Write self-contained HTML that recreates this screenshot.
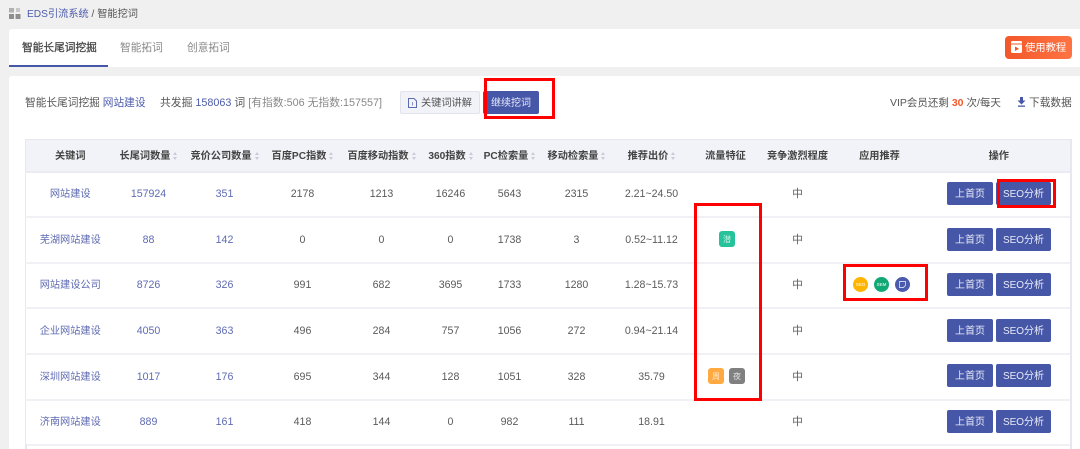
<!DOCTYPE html>
<html lang="zh">
<head>
<meta charset="utf-8">
<title>EDS引流系统</title>
<style>
*{box-sizing:border-box}
html,body{margin:0;padding:0;width:1080px;height:449px;overflow:hidden}
body{background:#f0f0f0;font-family:"Liberation Sans","Noto Sans CJK SC",sans-serif;font-size:10.3px;color:#555}
#w{position:absolute;left:0;top:0;width:1080px;height:449px;overflow:hidden;filter:blur(.3px);background:#f0f0f0}
.a{position:absolute;white-space:nowrap}
.t{line-height:14px}
.blue{color:#4d5cab}
.panel{position:absolute;background:#fff;left:9px;right:0}
.red{position:absolute;border:3px solid #f00;z-index:5}
table{position:absolute;left:25px;top:139px;width:1046px;border-collapse:collapse;table-layout:fixed;background:#fff;border-left:1.5px solid #e7e7ef;border-top:1px solid #e7e7ef}
th{height:32px;background:#f2f3f8;font-size:10.2px;line-height:14px;color:#444;font-weight:bold;padding:3px 0 0;white-space:nowrap;text-align:center;border-bottom:2px solid #ebebf3}
td{padding:0;text-align:center;white-space:nowrap;border-bottom:2px solid #f0f0f5;font-size:10.6px;line-height:12px;color:#5a5a5a}
td:nth-child(1),td:nth-child(2),td:nth-child(3){color:#5f6bb2}
td:nth-child(1){font-size:10.2px;padding-top:2px}
th:last-child{padding-left:4px}
.s{display:inline-block;width:4px;height:8px;margin-left:3px;vertical-align:-1px}
.btn{position:absolute;height:23px;background:#4657a8;color:#e9ebf7;font-size:10px;line-height:26px;text-align:center;border-radius:2px}
.b1{left:947px;width:46px}
.b2{left:996px;width:55px}
.tag{position:absolute;width:16px;height:16px;border-radius:3px;color:#ffffffc0;font-size:8px;line-height:17px;text-align:center}
.c{position:absolute;top:277px;width:15px;height:15px;border-radius:50%;color:#ffffffc0;font-size:4.5px;line-height:15px;text-align:center;font-weight:bold}
</style>
</head>
<body>
<div id="w">
<svg class="a" style="left:9px;top:8px" width="12" height="11" viewBox="0 0 12 11"><rect x="0" y="0" width="5" height="4.500" fill="#b0b0b0"/><rect x="7" y="0" width="4" height="4" fill="#c8c8c8"/><rect x="0" y="6" width="5" height="5" fill="#8e8e8e"/><rect x="6.500" y="6" width="5" height="5" fill="#8e8e8e"/></svg>
<div class="a t" style="left:27px;top:8px;font-size:10.2px"><span class="blue">EDS引流系统</span> / 智能挖词</div>

<div class="panel" style="top:29px;height:38px;border-radius:3px 0 0 0"></div>
<div class="a" style="left:9px;top:65px;width:99px;height:2px;background:#4657a8"></div>
<div class="a t" style="left:22px;top:41px;font-size:10.7px;color:#444;-webkit-text-stroke:.25px #444">智能长尾词挖掘</div>
<div class="a t" style="left:120px;top:41px;font-size:10.7px;color:#888">智能拓词</div>
<div class="a t" style="left:187px;top:41px;font-size:10.7px;color:#888">创意拓词</div>

<div class="a" style="left:1005px;top:36px;width:67px;height:23px;border-radius:4px;background:linear-gradient(90deg,#f2582a,#ff7343)"></div>
<svg class="a" style="left:1011px;top:41px" width="11" height="12" viewBox="0 0 11 12"><rect x="0" y="0" width="11" height="12" rx="1.500" fill="#fff"/><rect x="0" y="2.500" width="11" height="1" fill="#f2582a"/><path d="M4 5.500 8 7.700 4 10z" fill="#f2582a"/></svg>
<div class="a t" style="left:1025px;top:42px;font-size:10.3px;color:#fff">使用教程</div>

<div class="panel" style="top:76px;bottom:0;border-radius:3px 0 0 0"></div>

<div class="a t" style="left:25px;top:96px;font-size:10.7px">智能长尾词挖掘 <span class="blue">网站建设</span></div>
<div class="a t" style="left:160px;top:96px;font-size:10.8px">共发掘 <span class="blue">158063</span> 词 <span style="color:#888">[有指数:506 无指数:157557]</span></div>

<div class="a" style="left:400px;top:91px;width:80px;height:23px;background:#f2f3f8;border:1px solid #e2e3ec;border-radius:2px"></div>
<svg class="a" style="left:408px;top:98px" width="9" height="10" viewBox="0 0 9 10"><path d="M.5.500H6L8.500 3V9.500H.5Z" fill="none" stroke="#5c6ab0"/><path d="M4.500 4V7.500" stroke="#8a93c6"/></svg>
<div class="a t" style="left:421px;top:97px;font-size:10.2px;color:#555">关键词讲解</div>
<div class="a" style="left:483px;top:91px;width:56px;height:23px;background:#4657a8;border-radius:2px;color:#e9ebf7;font-size:10px;line-height:26px;text-align:center">继续挖词</div>

<div class="a t" style="left:890px;top:96px;font-size:10.5px">VIP会员还剩 <b style="color:#f4582a">30</b> 次/每天</div>
<svg class="a" style="left:1017px;top:97px" width="9" height="10" viewBox="0 0 9 10"><path d="M3 0H6V3.500H8.500L4.500 7.500.5 3.500H3Z" fill="#4657a8"/><rect x="1" y="8.500" width="7" height="1.300" fill="#4657a8"/></svg>
<div class="a t" style="left:1029px;top:96px;font-size:10.7px">下载数据</div>

<table>
<colgroup><col style="width:89px"><col style="width:68px"><col style="width:84px"><col style="width:72px"><col style="width:86px"><col style="width:52px"><col style="width:66px"><col style="width:68px"><col style="width:82px"><col style="width:66px"><col style="width:78px"><col style="width:86px"><col></colgroup>
<tr>
<th>关键词</th>
<th>长尾词数量<svg class="s" viewBox="0 0 4 8"><path d="M2 0 4 3H0ZM2 8 0 5H4Z" fill="#c9ccd8"/></svg></th>
<th>竞价公司数量<svg class="s" viewBox="0 0 4 8"><path d="M2 0 4 3H0ZM2 8 0 5H4Z" fill="#c9ccd8"/></svg></th>
<th>百度PC指数<svg class="s" viewBox="0 0 4 8"><path d="M2 0 4 3H0ZM2 8 0 5H4Z" fill="#c9ccd8"/></svg></th>
<th>百度移动指数<svg class="s" viewBox="0 0 4 8"><path d="M2 0 4 3H0ZM2 8 0 5H4Z" fill="#c9ccd8"/></svg></th>
<th>360指数<svg class="s" viewBox="0 0 4 8"><path d="M2 0 4 3H0ZM2 8 0 5H4Z" fill="#c9ccd8"/></svg></th>
<th>PC检索量<svg class="s" viewBox="0 0 4 8"><path d="M2 0 4 3H0ZM2 8 0 5H4Z" fill="#c9ccd8"/></svg></th>
<th>移动检索量<svg class="s" viewBox="0 0 4 8"><path d="M2 0 4 3H0ZM2 8 0 5H4Z" fill="#c9ccd8"/></svg></th>
<th>推荐出价<svg class="s" viewBox="0 0 4 8"><path d="M2 0 4 3H0ZM2 8 0 5H4Z" fill="#c9ccd8"/></svg></th>
<th>流量特征</th><th>竞争激烈程度</th><th>应用推荐</th><th>操作</th>
</tr>
<tr style="height:45px"><td>网站建设</td><td>157924</td><td>351</td><td>2178</td><td>1213</td><td>16246</td><td>5643</td><td>2315</td><td>2.21~24.50</td><td></td><td>中</td><td></td><td></td></tr>
<tr style="height:46px"><td>芜湖网站建设</td><td>88</td><td>142</td><td>0</td><td>0</td><td>0</td><td>1738</td><td>3</td><td>0.52~11.12</td><td></td><td>中</td><td></td><td></td></tr>
<tr style="height:45px"><td>网站建设公司</td><td>8726</td><td>326</td><td>991</td><td>682</td><td>3695</td><td>1733</td><td>1280</td><td>1.28~15.73</td><td></td><td>中</td><td></td><td></td></tr>
<tr style="height:46px"><td>企业网站建设</td><td>4050</td><td>363</td><td>496</td><td>284</td><td>757</td><td>1056</td><td>272</td><td>0.94~21.14</td><td></td><td>中</td><td></td><td></td></tr>
<tr style="height:46px"><td>深圳网站建设</td><td>1017</td><td>176</td><td>695</td><td>344</td><td>128</td><td>1051</td><td>328</td><td>35.79</td><td></td><td>中</td><td></td><td></td></tr>
<tr style="height:45px"><td>济南网站建设</td><td>889</td><td>161</td><td>418</td><td>144</td><td>0</td><td>982</td><td>111</td><td>18.91</td><td></td><td>中</td><td></td><td></td></tr>
</table>
<div class="a" style="left:1070px;top:139px;width:1.500px;height:310px;background:#e7e7ef"></div>
<div class="a" style="left:25px;top:444px;width:1.500px;height:5px;background:#e7e7ef"></div>

<div class="btn b1" style="top:182px">上首页</div><div class="btn b2" style="top:182px">SEO分析</div>
<div class="btn b1" style="top:228px">上首页</div><div class="btn b2" style="top:228px">SEO分析</div>
<div class="btn b1" style="top:273px">上首页</div><div class="btn b2" style="top:273px">SEO分析</div>
<div class="btn b1" style="top:319px">上首页</div><div class="btn b2" style="top:319px">SEO分析</div>
<div class="btn b1" style="top:364px">上首页</div><div class="btn b2" style="top:364px">SEO分析</div>
<div class="btn b1" style="top:410px">上首页</div><div class="btn b2" style="top:410px">SEO分析</div>

<div class="tag" style="left:719px;top:231px;background:#26c29a">潜</div>
<div class="tag" style="left:708px;top:368px;background:#ffa940">周</div>
<div class="tag" style="left:729px;top:368px;background:#808080">夜</div>

<div class="c" style="left:853px;background:#ffb400">SEO</div>
<div class="c" style="left:874px;background:#12a875">SEM</div>
<div class="c" style="left:895px;background:#4a5aad"></div>
<svg class="a" style="left:899px;top:281px" width="7" height="7" viewBox="0 0 7 7"><path d="M.5.500H6.500V4.500L4.500 6.500H.5Z" fill="none" stroke="#cfd4ee" stroke-width=".9"/></svg>

<div class="red" style="left:484px;top:78px;width:71px;height:41px"></div>
<div class="red" style="left:997px;top:179px;width:59px;height:29px"></div>
<div class="red" style="left:694px;top:203px;width:68px;height:198px"></div>
<div class="red" style="left:843px;top:264px;width:85px;height:37px"></div>
</div>
</body>
</html>
